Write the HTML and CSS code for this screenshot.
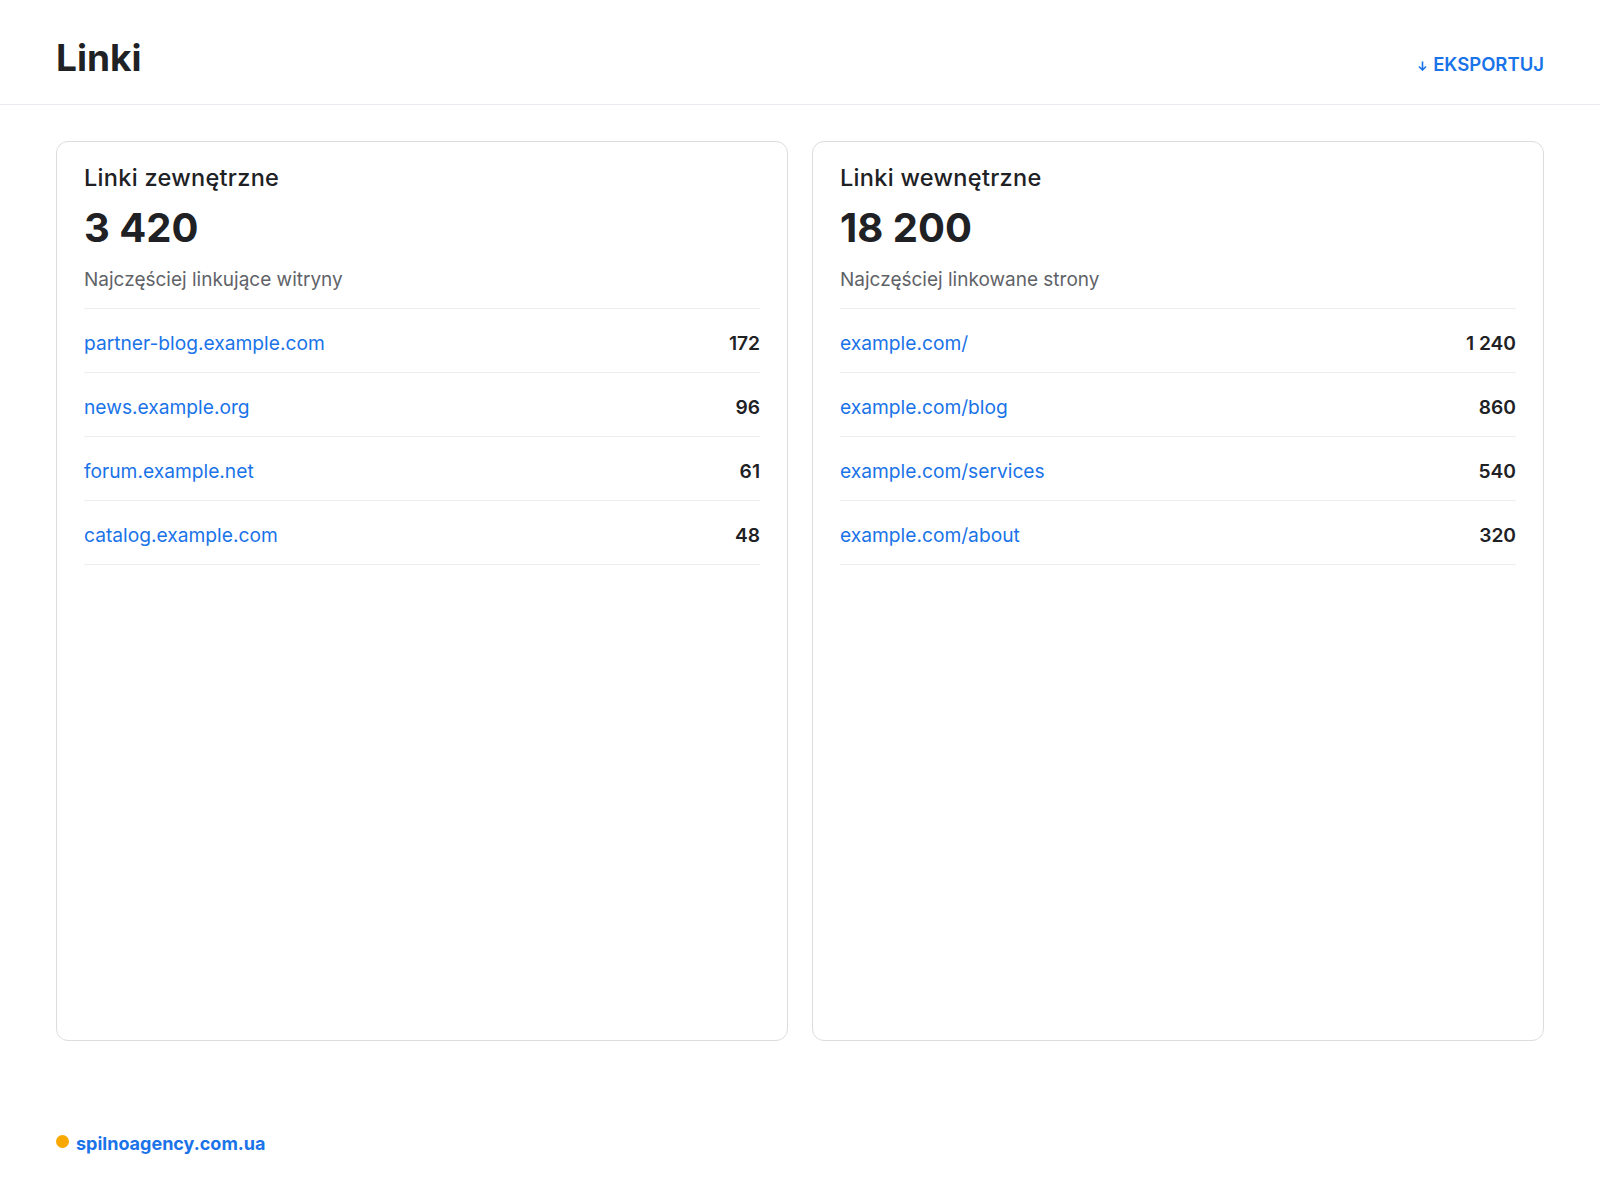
FILE: index.html
```html
<!DOCTYPE html>
<html lang="pl">
<head>
  <meta charset="UTF-8">
  <title>Linki</title>
  <meta name="viewport" content="width=device-width, initial-scale=1.0">
  <link rel="stylesheet" href="styles.css">
</head>
<body>

<header class="top">
  <h1>Linki</h1>
  <a class="export" href="#">
    <svg width="9" height="10" viewBox="0 0 9 10"><path d="M4.5 0.5v8.5M1 5.5l3.5 3.5 3.5-3.5" stroke="currentColor" stroke-width="1.6" fill="none"/></svg>
    EKSPORTUJ
  </a>
</header>

<main class="cards">

  <section class="card">
    <h3>Linki zewnętrzne</h3>
    <div class="total">3 420</div>
    <div class="sub">Najczęściej linkujące witryny</div>
    <ul class="rows">
      <li><a href="#">partner-blog.example.com</a><b>172</b></li>
      <li><a href="#">news.example.org</a><b>96</b></li>
      <li><a href="#">forum.example.net</a><b>61</b></li>
      <li><a href="#">catalog.example.com</a><b>48</b></li>
    </ul>
  </section>

  <section class="card">
    <h3>Linki wewnętrzne</h3>
    <div class="total">18 200</div>
    <div class="sub">Najczęściej linkowane strony</div>
    <ul class="rows">
      <li><a href="#">example.com/</a><b>1 240</b></li>
      <li><a href="#">example.com/blog</a><b>860</b></li>
      <li><a href="#">example.com/services</a><b>540</b></li>
      <li><a href="#">example.com/about</a><b>320</b></li>
    </ul>
  </section>

</main>

<footer class="foot">
  <span class="dot"></span>
  <a href="#">spilnoagency.com.ua</a>
</footer>

</body>
</html>
```

FILE: styles.css
```css
* { box-sizing: border-box; }
body {
  margin: 0;
  font-family: 'Inter', 'Liberation Sans', sans-serif;
  color: #202124;
  background: #fff;
  min-height: 100vh;
  display: flex;
  flex-direction: column;
}
a {
  color: #1a73e8;
  text-decoration: none;
}

.top {
  display: flex;
  justify-content: space-between;
  align-items: baseline;
  padding: 35px 56px 24px;
  border-bottom: 1px solid #e8ecf0;
}
.top h1 {
  margin: 0;
  font-size: 37px;
  font-weight: 700;
  line-height: normal;
}
.export {
  display: flex;
  align-items: baseline;
  gap: 6px;
  font-size: 18.5px;
  font-weight: 600;
}

.cards {
  flex: 1;
  display: grid;
  grid-template-columns: 1fr 1fr;
  gap: 24px;
  padding: 36px 56px 0;
}
.card {
  border: 1px solid #dcdde1;
  border-radius: 12px;
  padding: 21px 27px;
}
.card h3 {
  margin: 0;
  font-size: 23.5px;
  font-weight: 500;
  letter-spacing: 0.3px;
}
.total {
  margin-top: 11px;
  font-size: 40px;
  font-weight: 700;
}
.sub {
  margin-top: 16px;
  padding-bottom: 17px;
  border-bottom: 1px solid #eceef1;
  font-size: 19px;
  color: #5f6368;
}
.rows {
  list-style: none;
  margin: 0;
  padding: 0;
}
.rows li {
  display: flex;
  justify-content: space-between;
  padding: 23px 0 17px;
  border-bottom: 1px solid #eceef1;
  font-size: 19.2px;
  line-height: 23px;
}
.rows b {
  font-weight: 600;
  color: #202124;
}

.foot {
  display: flex;
  align-items: flex-start;
  gap: 7px;
  padding: 92px 56px 26px;
  font-size: 18px;
  font-weight: 700;
}
.dot {
  width: 13px;
  height: 13px;
  margin-top: 2px;
  border-radius: 50%;
  background: #f9a800;
}
```
